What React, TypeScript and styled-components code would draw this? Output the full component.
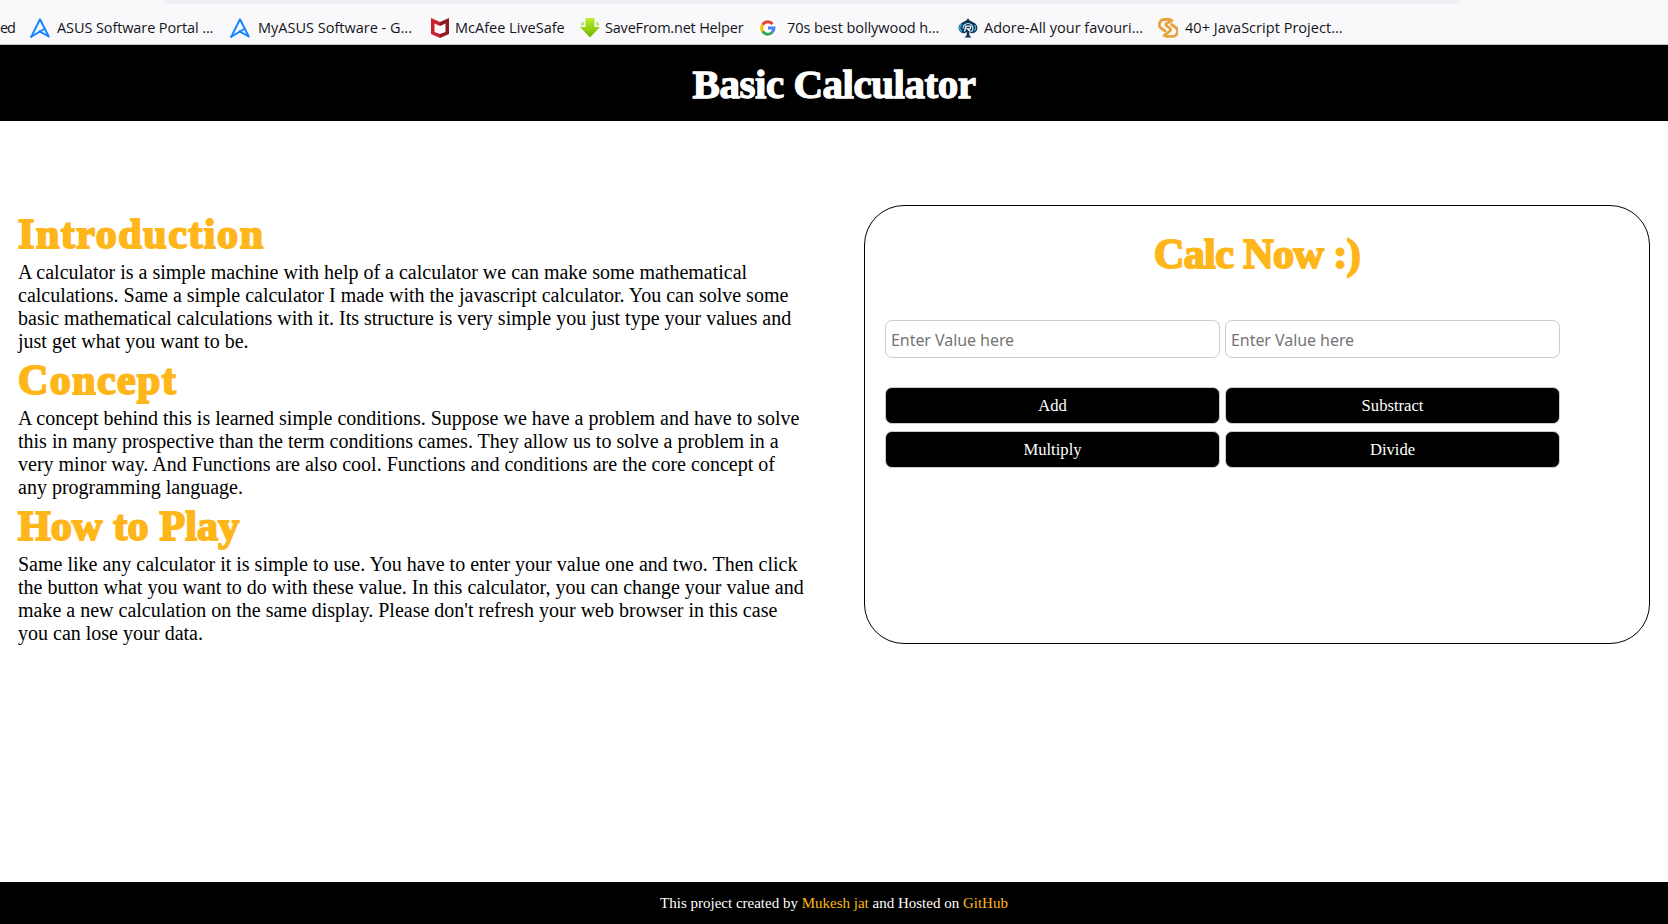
import React from 'react';
import styled, { createGlobalStyle } from 'styled-components';

const GlobalStyle = createGlobalStyle`
  * { box-sizing: border-box; margin: 0; padding: 0; }
  body { background: #fff; color: #000; font-family: "Liberation Serif", "Times New Roman", serif; overflow: hidden; }
`;

const Page = styled.div`
  display: flex;
  flex-direction: column;
  height: 924px;
  width: 100%;
`;

const BrowserBar = styled.div`
  height: 45px;
  flex: none;
  background: #f9f9fb;
  border-bottom: 1px solid #c4c4c6;
  overflow: hidden;
`;

const AddressField = styled.div`
  height: 4px;
  margin: 0 208px 0 163px;
  background: #f0f0f4;
  border-radius: 0 0 4px 4px;
`;

const Bookmarks = styled.nav`
  display: flex;
  align-items: center;
  height: 40px;
  padding-top: 7px;
  font-family: "Open Sans", sans-serif;
  font-size: 14.5px;
  line-height: 20px;
  color: #15141a;
  white-space: nowrap;
`;

const Bookmark = styled.a<{ $width: number; $spacing?: number; $gap?: number }>`
  display: flex;
  flex: none;
  align-items: center;
  gap: ${(p) => p.$gap ?? 7}px;
  width: ${(p) => p.$width}px;
  letter-spacing: ${(p) => p.$spacing ?? 0}px;
  svg { flex: none; display: block; }
`;

const Header = styled.header`
  display: flex;
  justify-content: center;
  height: 76px;
  flex: none;
  padding-top: 12px;
  background: #000;
`;

const Title = styled.h1`
  color: #fff;
  font-size: 41px;
  line-height: 54px;
  letter-spacing: -0.47px;
  -webkit-text-stroke: 1.3px #fff;
`;

const Main = styled.main`
  display: flex;
  justify-content: space-between;
  flex: 1;
  padding: 84px 18px 0;
`;

const Article = styled.article`
  width: 790px;
  padding-top: 2px;
`;

const Heading = styled.h2<{ $spacing: number }>`
  color: #ffb61a;
  font-size: 42px;
  line-height: 54px;
  letter-spacing: ${(p) => p.$spacing}px;
  -webkit-text-stroke: 2px #ffb61a;
`;

const Paragraph = styled.p`
  font-size: 20px;
  line-height: 23px;
`;

const Card = styled.section`
  width: 786px;
  height: 439px;
  padding: 21px 20px;
  border: 1px solid #000;
  border-radius: 40px;
`;

const CardTitle = styled(Heading)`
  text-align: center;
`;

const Fields = styled.div`
  display: grid;
  grid-template-columns: 335px 335px;
  column-gap: 5px;
  margin-top: 39px;
`;

const Actions = styled(Fields)`
  margin-top: 29px;
  row-gap: 7px;
`;

const ValueInput = styled.input`
  height: 38px;
  padding: 2px 5px 0;
  border: 1px solid #ccc;
  border-radius: 7px;
  background: #fff;
  font-family: "Noto Sans", sans-serif;
  font-size: 16px;
  letter-spacing: -0.06px;
  &::placeholder { color: #757575; opacity: 1; }
`;

const ActionButton = styled.button`
  height: 37px;
  border: 1px solid #ccc;
  border-radius: 7px;
  background: #000;
  color: #fff;
  font-family: "Liberation Serif", serif;
  font-size: 16.6px;
`;

const Footer = styled.footer`
  display: flex;
  justify-content: center;
  height: 42px;
  flex: none;
  background: #000;
  color: #fff;
  font-size: 15px;
  line-height: 43px;
  white-space: pre;
`;

const FooterLink = styled.a`
  color: #ffb61a;
`;

const AsusIcon = () => (
  <svg width="20" height="20" viewBox="0 0 20 20" fill="none" stroke="#1a86ff" strokeWidth="2" strokeLinejoin="round" strokeLinecap="round">
    <path d="M1.3 18.7 10 1.3l8.7 17.2-9.1-5.2" />
    <path d="M1.3 18.7 14.3 11" />
  </svg>
);

const McAfeeIcon = () => (
  <svg width="18" height="20" viewBox="0 0 18 20">
    <path d="M0 0 9 4v16L0 16z" fill="#c8202f" />
    <path d="M18 0 9 4v16l9-4z" fill="#8c1a22" />
    <path d="M3.5 5.500 9 8l5.500-2.500v8.500L9 16 3.500 14z" fill="#f9f9fb" />
  </svg>
);

const SaveFromIcon = () => (
  <svg width="20" height="20" viewBox="0 0 20 20">
    <defs>
      <linearGradient id="saveGreen" x1="0" y1="0" x2="0" y2="1">
        <stop offset="0" stopColor="#bdf02c" />
        <stop offset="1" stopColor="#72b500" />
      </linearGradient>
    </defs>
    <path d="M5.500 0h9v9H20L10 19.500 0 9h5.500z" fill="url(#saveGreen)" />
    <path d="M.5 7.500h3.200V3.500L1.500 5zM19.500 7.500h-3.200V3.500L18.500 5z" fill="#b5e35a" />
  </svg>
);

const GoogleIcon = () => (
  <svg width="20" height="20" viewBox="0 0 20 20" fill="none" strokeWidth="3">
    <circle cx="10" cy="10" r="10" fill="#fff" />
    <path d="M4.700 6.700A6 6 0 0 1 14.500 6" stroke="#ea4335" />
    <path d="M4.700 13.300a6 6 0 0 1 0-6.600" stroke="#fbbc05" />
    <path d="M14 14.500a6 6 0 0 1-9.300-1.200" stroke="#34a853" />
    <path d="M10 10h6a6 6 0 0 1-2.200 4.600" stroke="#4285f4" />
  </svg>
);

const SpadeIcon = () => (
  <svg width="20" height="20" viewBox="0 0 20 20">
    <path d="M10 0c1 3 4 3.500 6.500 5 4.500 3 3.500 9-1 10-2 .4-3.500-.2-4.500-1l.5 3.500 2 2h-7l2-2L9 14c-1 .8-2.500 1.400-4.500 1-4.500-1-5.500-7-1-10C6 3.500 9 3 10 0z" fill="#0c3553" />
    <path d="M4 5.800C1 8 1 12 4 13.200" stroke="#28a3df" strokeWidth="1.800" fill="none" />
    <path d="M5 10.500A5 5 0 0 1 10 5.500a5 5 0 0 1 5 5c0 1.500-.7 2.500-1.700 3.300" stroke="#c6e8f5" strokeWidth="1.200" fill="none" />
    <path d="M6.500 13.500 8 8.200h3.500c2 0 1.500 2.800-.6 2.800H9.500l3 2.500" stroke="#fff" strokeWidth="1.300" fill="none" />
    <path d="M16.500 7c1.500 1.500 1.500 4 0 5.500" stroke="#5fbbe0" strokeWidth="1.200" fill="none" />
  </svg>
);

const ScriptIcon = () => (
  <svg width="20" height="20" viewBox="0 0 20 20" fill="none" stroke="#e9a13b" strokeWidth="2.800" strokeLinecap="round" strokeLinejoin="round">
    <path d="M12 1.500H6.500a5 5 0 0 0-3.500 8.700l4 2.500" />
    <path d="M14 2.500 8.500 5.500a1.300 1.300 0 0 0 0 2.300l3 2c1.500 1 1.500 2.500 0 3.500L6 17.500" />
    <path d="M13.500 6.500 17 9a5 5 0 0 1-3 9.300H8" />
  </svg>
);

export default function App() {
  return (
    <Page>
      <GlobalStyle />
      <BrowserBar>
        <AddressField />
        <Bookmarks>
          <Bookmark $width={30} $spacing={-1.1}>ed</Bookmark>
          <Bookmark $width={200} $spacing={-0.1}><AsusIcon />ASUS Software Portal ...</Bookmark>
          <Bookmark $width={201} $gap={8}><AsusIcon />MyASUS Software - G...</Bookmark>
          <Bookmark $width={149} $gap={6}><McAfeeIcon />McAfee LiveSafe</Bookmark>
          <Bookmark $width={178} $gap={5} $spacing={-0.2}><SaveFromIcon />SaveFrom.net Helper</Bookmark>
          <Bookmark $width={200} $gap={9} $spacing={-0.07}><GoogleIcon />70s best bollywood h...</Bookmark>
          <Bookmark $width={200} $gap={6}><SpadeIcon />Adore-All your favouri...</Bookmark>
          <Bookmark $width={200} $spacing={0.03}><ScriptIcon />40+ JavaScript Project...</Bookmark>
        </Bookmarks>
      </BrowserBar>
      <Header><Title>Basic Calculator</Title></Header>
      <Main>
        <Article>
          <Heading $spacing={1.55}>Introduction</Heading>
          <Paragraph>
            A calculator is a simple machine with help of a calculator we can make some mathematical calculations. Same a simple calculator I made with the javascript calculator. You can solve some basic mathematical calculations with it. Its structure is very simple you just type your values and just get what you want to be.
          </Paragraph>
          <Heading $spacing={1.4}>Concept</Heading>
          <Paragraph>
            A concept behind this is learned simple conditions. Suppose we have a problem and have to solve this in many prospective than the term conditions cames. They allow us to solve a problem in a very minor way. And Functions are also cool. Functions and conditions are the core concept of any programming language.
          </Paragraph>
          <Heading $spacing={0.2}>How to Play</Heading>
          <Paragraph>
            Same like any calculator it is simple to use. You have to enter your value one and two. Then click the button what you want to do with these value. In this calculator, you can change your value and make a new calculation on the same display. Please don't refresh your web browser in this case you can lose your data.
          </Paragraph>
        </Article>
        <Card>
          <CardTitle $spacing={-0.55}>Calc Now :)</CardTitle>
          <Fields>
            <ValueInput placeholder="Enter Value here" />
            <ValueInput placeholder="Enter Value here" />
          </Fields>
          <Actions>
            <ActionButton>Add</ActionButton>
            <ActionButton>Substract</ActionButton>
            <ActionButton>Multiply</ActionButton>
            <ActionButton>Divide</ActionButton>
          </Actions>
        </Card>
      </Main>
      <Footer>
        <span>This project created by </span>
        <FooterLink>Mukesh jat</FooterLink>
        <span> and Hosted on </span>
        <FooterLink>GitHub</FooterLink>
      </Footer>
    </Page>
  );
}
